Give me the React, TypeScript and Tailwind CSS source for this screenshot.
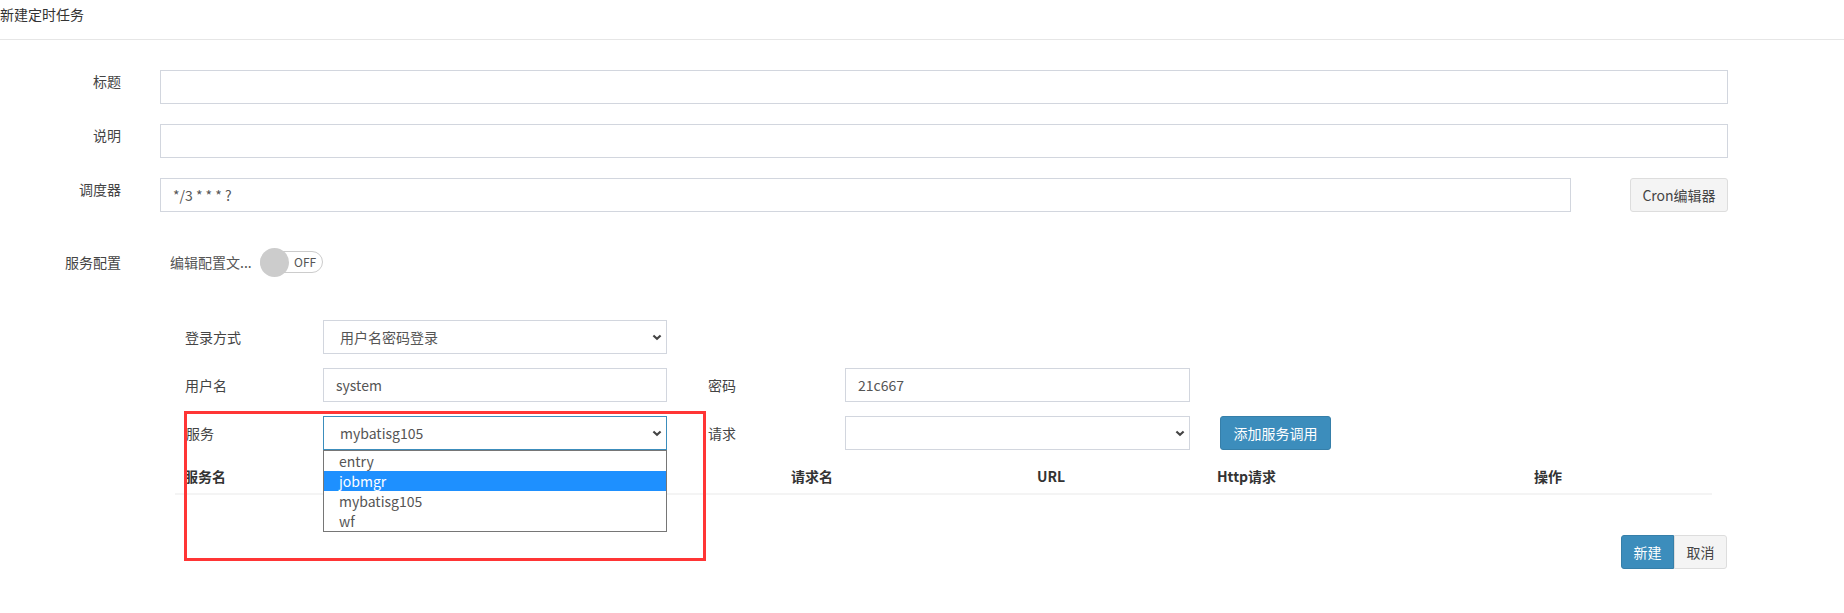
import React from "react";

function Chevron() {
  return (
    <svg width="10" height="7" viewBox="0 0 10 7" className="shrink-0">
      <path d="M1.4 1.4 L5 4.8 L8.6 1.4" fill="none" stroke="#444" strokeWidth="2.1" />
    </svg>
  );
}

function TextInput({ value, className }: { value?: string; className: string }) {
  return (
    <div className={`h-[34px] border border-[#d2d6de] bg-white flex items-center pl-[12px] text-[#555] ${className}`}>
      {value}
    </div>
  );
}

function Select({ value, className, focused }: { value?: string; className: string; focused?: boolean }) {
  return (
    <div
      className={`h-[34px] border ${focused ? "border-[#3c8dbc]" : "border-[#d2d6de]"} bg-white flex items-center justify-between pl-[16px] pr-[4px] text-[#555] ${className}`}
    >
      <span>{value}</span>
      <Chevron />
    </div>
  );
}

export default function App() {
  const options = ["entry", "jobmgr", "mybatisg105", "wf"];
  return (
    <div className="relative w-[1844px] h-[613px] bg-white text-[14px] leading-[20px] text-[#444] font-['Microsoft_YaHei','Noto_Sans_CJK_SC',sans-serif] overflow-hidden">
      {/* header */}
      <div className="h-[40px] border-b border-[#e6e6e6] pt-[4px] text-[#333]">新建定时任务</div>

      {/* main form */}
      <div className="pt-[30px]">
        <div className="flex items-start h-[34px]">
          <div className="w-[121px] text-right pt-[1px]">标题</div>
          <TextInput className="ml-[39px] w-[1568px]" />
        </div>
        <div className="flex items-start h-[34px] mt-[20px]">
          <div className="w-[121px] text-right pt-[1px]">说明</div>
          <TextInput className="ml-[39px] w-[1568px]" />
        </div>
        <div className="flex items-start h-[34px] mt-[20px]">
          <div className="w-[121px] text-right pt-[1px]">调度器</div>
          <TextInput className="ml-[39px] w-[1411px]" value="*/3 * * * ?" />
          <button className="ml-[59px] w-[98px] h-[34px] rounded-[3px] border border-[#ddd] bg-[#f4f4f4] text-[#444]">
            Cron编辑器
          </button>
        </div>

        {/* service config */}
        <div className="flex items-center h-[29px] mt-[35px]">
          <div className="w-[121px] text-right">服务配置</div>
          <div className="ml-[49px] w-[80px] whitespace-nowrap text-[#555]">编辑配置文...</div>
          <div className="ml-[10px] relative w-[63px] h-[22px] rounded-full border border-[#ccc] bg-white flex items-center">
            <div className="absolute left-[-1px] top-[-4px] w-[29px] h-[29px] rounded-full bg-[#ccc]" />
            <span className="ml-[33px] text-[12px] text-[#555] leading-[16px]">OFF</span>
          </div>
        </div>

        {/* login section */}
        <div className="mt-[44px] pl-[175px]">
          <div className="flex items-center h-[34px]">
            <div className="w-[148px] pl-[10px]">登录方式</div>
            <Select className="w-[344px]" value="用户名密码登录" />
          </div>
          <div className="flex items-center h-[34px] mt-[14px]">
            <div className="w-[148px] pl-[10px]">用户名</div>
            <TextInput className="w-[344px]" value="system" />
            <div className="ml-[41px] w-[137px]">密码</div>
            <TextInput className="w-[345px]" value="21c667" />
          </div>
          <div className="flex items-center h-[34px] mt-[14px]">
            <div className="w-[148px] pl-[11px]">服务</div>
            <div className="relative w-[344px]">
              <Select className="w-[344px]" value="mybatisg105" focused />
              <div className="absolute left-0 top-[34px] w-[344px] z-10 border border-[#767676] bg-white text-[#555]">
                {options.map((o) => (
                  <div
                    key={o}
                    className={`h-[20px] leading-[20px] pl-[15px] ${o === "jobmgr" ? "bg-[#1e90ff] text-white" : ""}`}
                  >
                    {o}
                  </div>
                ))}
              </div>
            </div>
            <div className="ml-[41px] w-[137px]">请求</div>
            <Select className="w-[345px]" />
            <button className="ml-[30px] w-[111px] h-[34px] rounded-[3px] border border-[#367fa9] bg-[#3c8dbc] text-white">
              添加服务调用
            </button>
          </div>

          {/* table header */}
          <div className="mt-[16px] w-[1537px] grid grid-cols-[607px_246px_180px_317px_1fr] pb-[7px] border-b-2 border-[#f4f4f4] font-bold text-[#333]">
            <div className="pl-[9px]">服务名</div>
            <div className="pl-[9px]">请求名</div>
            <div className="pl-[9px]">URL</div>
            <div className="pl-[9px]">Http请求</div>
            <div className="pl-[9px]">操作</div>
          </div>
        </div>

        {/* actions */}
        <div className="flex justify-end pr-[117px] mt-[40px]">
          <button className="w-[53px] h-[34px] rounded-l-[3px] border border-[#367fa9] bg-[#3c8dbc] text-white">新建</button>
          <button className="w-[53px] h-[34px] rounded-r-[3px] border border-[#ddd] bg-[#f4f4f4] text-[#444]">取消</button>
        </div>
      </div>

      {/* red annotation box */}
      <div className="absolute left-[184px] top-[411px] w-[522px] h-[150px] border-[3px] border-[#ff3535] pointer-events-none" />
    </div>
  );
}
